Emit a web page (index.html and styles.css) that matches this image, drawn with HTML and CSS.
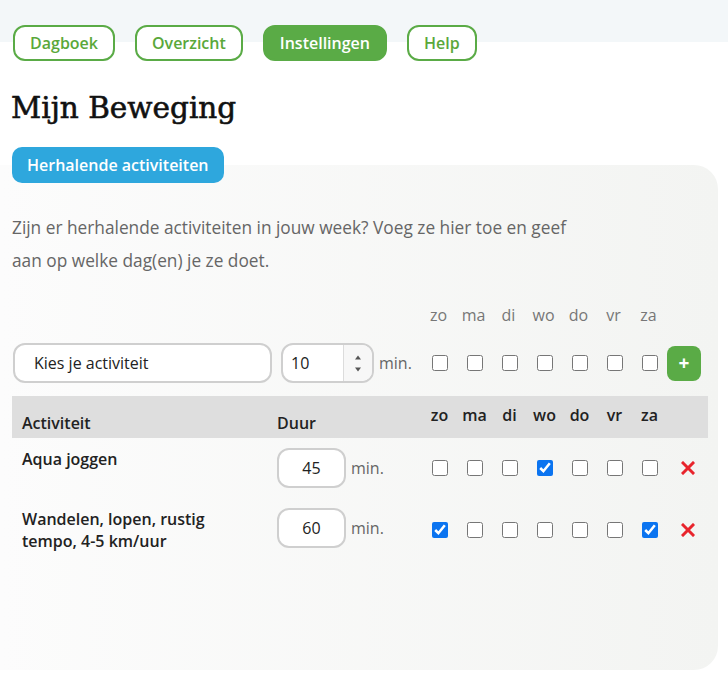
FILE: index.html
```html
<!DOCTYPE html>
<html lang="nl">
<head>
    <meta charset="UTF-8">
    <meta name="viewport" content="width=device-width, initial-scale=1.0">
    <title>Mijn Beweging</title>
    <link rel="stylesheet" href="styles.css">
</head>

<body>
    <header class="topbar">
        <nav class="nav">
            <a class="nav-btn" href="#">Dagboek</a>
            <a class="nav-btn" href="#">Overzicht</a>
            <a class="nav-btn active" href="#">Instellingen</a>
            <a class="nav-btn" href="#">Help</a>
        </nav>
    </header>

    <h1 class="title">Mijn Beweging</h1>

    <div class="tab">Herhalende activiteiten</div>

    <section class="panel">
        <p class="intro">Zijn er herhalende activiteiten in jouw week? Voeg ze hier toe en geef<br>aan op welke dag(en) je ze doet.</p>

        <div class="add-grid day-labels">
            <span></span><span></span><span></span>
            <div class="days">
                <span>zo</span><span>ma</span><span>di</span><span>wo</span><span>do</span><span>vr</span><span>za</span>
            </div>
        </div>

        <div class="add-grid add-row">
            <div class="field select">Kies je activiteit</div>
            <div class="field number">
                <span class="num-value">10</span>
                <span class="spinner">
                    <svg width="8" height="5" viewBox="0 0 8 5"><path d="M4 0.5 L7 4.5 H1 Z" fill="#555"/></svg>
                    <svg width="8" height="5" viewBox="0 0 8 5"><path d="M4 4.5 L7 0.5 H1 Z" fill="#555"/></svg>
                </span>
            </div>
            <span class="unit">min.</span>
            <div class="days">
                <input type="checkbox"><input type="checkbox"><input type="checkbox"><input type="checkbox"><input type="checkbox"><input type="checkbox"><input type="checkbox">
            </div>
            <button class="add-btn">+</button>
        </div>

        <div class="table">
            <div class="row head">
                <span>Activiteit</span>
                <span>Duur</span>
                <div class="days">
                    <span>zo</span><span>ma</span><span>di</span><span>wo</span><span>do</span><span>vr</span><span>za</span>
                </div>
                <span></span>
            </div>

            <div class="row">
                <span class="name">Aqua joggen</span>
                <div class="duur"><span class="field mini">45</span><span class="unit">min.</span></div>
                <div class="days">
                    <input type="checkbox"><input type="checkbox"><input type="checkbox"><input type="checkbox" checked><input type="checkbox"><input type="checkbox"><input type="checkbox">
                </div>
                <span class="remove">
                    <svg width="14" height="14" viewBox="0 0 14 14"><path d="M2 2 L12 12 M12 2 L2 12" stroke="#e8242c" stroke-width="3" stroke-linecap="square"/></svg>
                </span>
            </div>

            <div class="row">
                <span class="name">Wandelen, lopen, rustig<br>tempo, 4-5 km/uur</span>
                <div class="duur"><span class="field mini">60</span><span class="unit">min.</span></div>
                <div class="days">
                    <input type="checkbox" checked><input type="checkbox"><input type="checkbox"><input type="checkbox"><input type="checkbox"><input type="checkbox"><input type="checkbox" checked>
                </div>
                <span class="remove">
                    <svg width="14" height="14" viewBox="0 0 14 14"><path d="M2 2 L12 12 M12 2 L2 12" stroke="#e8242c" stroke-width="3" stroke-linecap="square"/></svg>
                </span>
            </div>
        </div>
    </section>
</body>
</html>
```

FILE: styles.css
```css
* {
    box-sizing: border-box;
}

body {
    margin: 0;
    background: #fff;
    font-family: "Open Sans", "Noto Sans", sans-serif;
    color: #222;
    overflow: hidden;
}

.topbar {
    background: linear-gradient(#f3f7f9 42px, #fff 42px);
    padding: 25px 13px 0;
}

.nav {
    display: flex;
    gap: 20px;
}

.nav-btn {
    display: flex;
    align-items: center;
    justify-content: center;
    height: 36px;
    padding: 0 15px;
    border: 2px solid #5aab46;
    border-radius: 12px;
    background: #fff;
    color: #5aa83a;
    font-size: 16px;
    font-weight: 600;
    text-decoration: none;
}

.nav-btn.active {
    background: #5aab46;
    color: #fff;
}

.title {
    margin: 29px 0 0 11px;
    font-family: "DejaVu Serif", serif;
    font-weight: normal;
    font-size: 29.5px;
    line-height: 36px;
    color: #111;
    -webkit-text-stroke: 0.6px #111;
}

.tab {
    position: relative;
    z-index: 1;
    display: flex;
    align-items: center;
    width: fit-content;
    height: 36px;
    margin: 21px 0 -18px 12px;
    padding: 0 15px;
    border-radius: 10px;
    background: #2ea7dd;
    color: #fff;
    font-size: 16px;
    font-weight: 600;
}

.panel {
    width: 718px;
    min-height: 505px;
    padding: 46px 10px 0 12px;
    border-radius: 0 24px 24px 0;
    background: linear-gradient(to right, #fcfcfc, #f3f4f2);
}

.intro {
    margin: 0;
    color: #666;
    font-size: 17.3px;
    line-height: 33px;
}

.add-grid {
    display: grid;
    grid-template-columns: 268px 93px 48px 245px 34px;
    align-items: center;
}

.day-labels {
    margin-top: 28px;
    color: #777;
    font-size: 16px;
    line-height: 20px;
}

.days {
    display: grid;
    grid-template-columns: repeat(7, 35px);
    justify-items: center;
    align-items: center;
}

.days input {
    width: 16px;
    height: 16px;
    margin: 0;
    accent-color: #0b74f0;
}

.add-row {
    margin-top: 18px;
    padding-left: 1px;
}

.field {
    display: flex;
    align-items: center;
    height: 40px;
    border: 2px solid #cfcfcf;
    border-radius: 12px;
    background: #fff;
    font-size: 16px;
    color: #222;
}

.select {
    width: 259px;
    padding-left: 19px;
}

.number {
    width: 93px;
    overflow: hidden;
}

.num-value {
    flex: 1;
    padding-left: 8px;
}

.spinner {
    display: flex;
    flex-direction: column;
    justify-content: center;
    align-items: center;
    gap: 7px;
    width: 29px;
    height: 100%;
    border-left: 1px solid #dcdcdc;
    background: #f7f7f7;
}

.spinner svg {
    display: block;
}

.unit {
    color: #666;
    font-size: 16px;
    padding-left: 5px;
}

.add-btn {
    width: 34px;
    height: 35px;
    border: none;
    border-radius: 8px;
    background: #5aab46;
    color: #fff;
    font-family: inherit;
    font-size: 19px;
    font-weight: 700;
    line-height: 1;
    padding: 0;
}

.table {
    margin-top: 13px;
}

.row {
    display: grid;
    grid-template-columns: 255px 145px 245px 41px;
    padding: 10px 0 10px 10px;
    align-items: start;
}

.row.head {
    height: 42px;
    padding: 0 0 4px 10px;
    align-items: end;
    background: #dedede;
    font-size: 16px;
    font-weight: 600;
    line-height: 22px;
}

.row .days,
.row .remove {
    align-self: center;
}

.name {
    font-size: 16px;
    font-weight: 600;
    line-height: 22px;
    color: #222;
}

.duur {
    display: flex;
    align-items: center;
}

.mini {
    width: 69px;
    height: 40px;
    justify-content: center;
}

.remove {
    display: flex;
    justify-content: center;
    padding-left: 1px;
}

.remove svg {
    display: block;
}
```
